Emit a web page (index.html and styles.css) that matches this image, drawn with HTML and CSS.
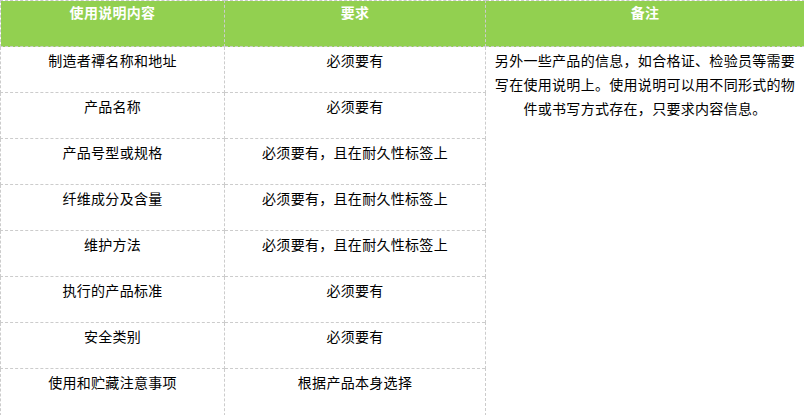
FILE: index.html
```html
<!DOCTYPE html>
<html lang="zh">
<head>
<meta charset="utf-8">
<link rel="stylesheet" href="styles.css">
</head>
<body>
<table class="spec">
  <colgroup>
    <col class="c1">
    <col class="c2">
    <col class="c3">
  </colgroup>
  <thead>
    <tr>
      <th>使用说明内容</th>
      <th>要求</th>
      <th>备注</th>
    </tr>
  </thead>
  <tbody>
    <tr>
      <td>制造者禫名称和地址</td>
      <td>必须要有</td>
      <td class="note" rowspan="8">另外一些产品的信息，如合格证、检验员等需要写在使用说明上。使用说明可以用不同形式的物件或书写方式存在，只要求内容信息。</td>
    </tr>
    <tr><td>产品名称</td><td>必须要有</td></tr>
    <tr><td>产品号型或规格</td><td>必须要有，且在耐久性标签上</td></tr>
    <tr><td>纤维成分及含量</td><td>必须要有，且在耐久性标签上</td></tr>
    <tr><td>维护方法</td><td>必须要有，且在耐久性标签上</td></tr>
    <tr><td>执行的产品标准</td><td>必须要有</td></tr>
    <tr><td>安全类别</td><td>必须要有</td></tr>
    <tr class="last"><td>使用和贮藏注意事项</td><td>根据产品本身选择</td></tr>
  </tbody>
</table>
</body>
</html>
```
FILE: styles.css
```css
html, body {
  margin: 0;
  padding: 0;
  background: #ffffff;
}
.spec {
  border-collapse: collapse;
  table-layout: fixed;
  width: 804px;
  font-family: "Noto Sans CJK SC", "Noto Sans", sans-serif;
  font-size: 14px;
  letter-spacing: 0.3px;
  color: #000;
}
.c1 { width: 224px; }
.c2 { width: 261px; }
.c3 { width: 319px; }
.spec th,
.spec td {
  border: 1px dashed #cccccc;
  text-align: center;
  vertical-align: top;
  line-height: 24px;
  padding: 1px 8px 0;
  box-sizing: border-box;
}
.spec th {
  background: #92d050;
  color: #ffffff;
  font-weight: bold;
  height: 46px;
  line-height: 22px;
  padding-top: 0;
}
.spec td {
  height: 46px;
}
.spec .last td {
  height: 52px;
}
.spec td.note {
  height: auto;
}
```
